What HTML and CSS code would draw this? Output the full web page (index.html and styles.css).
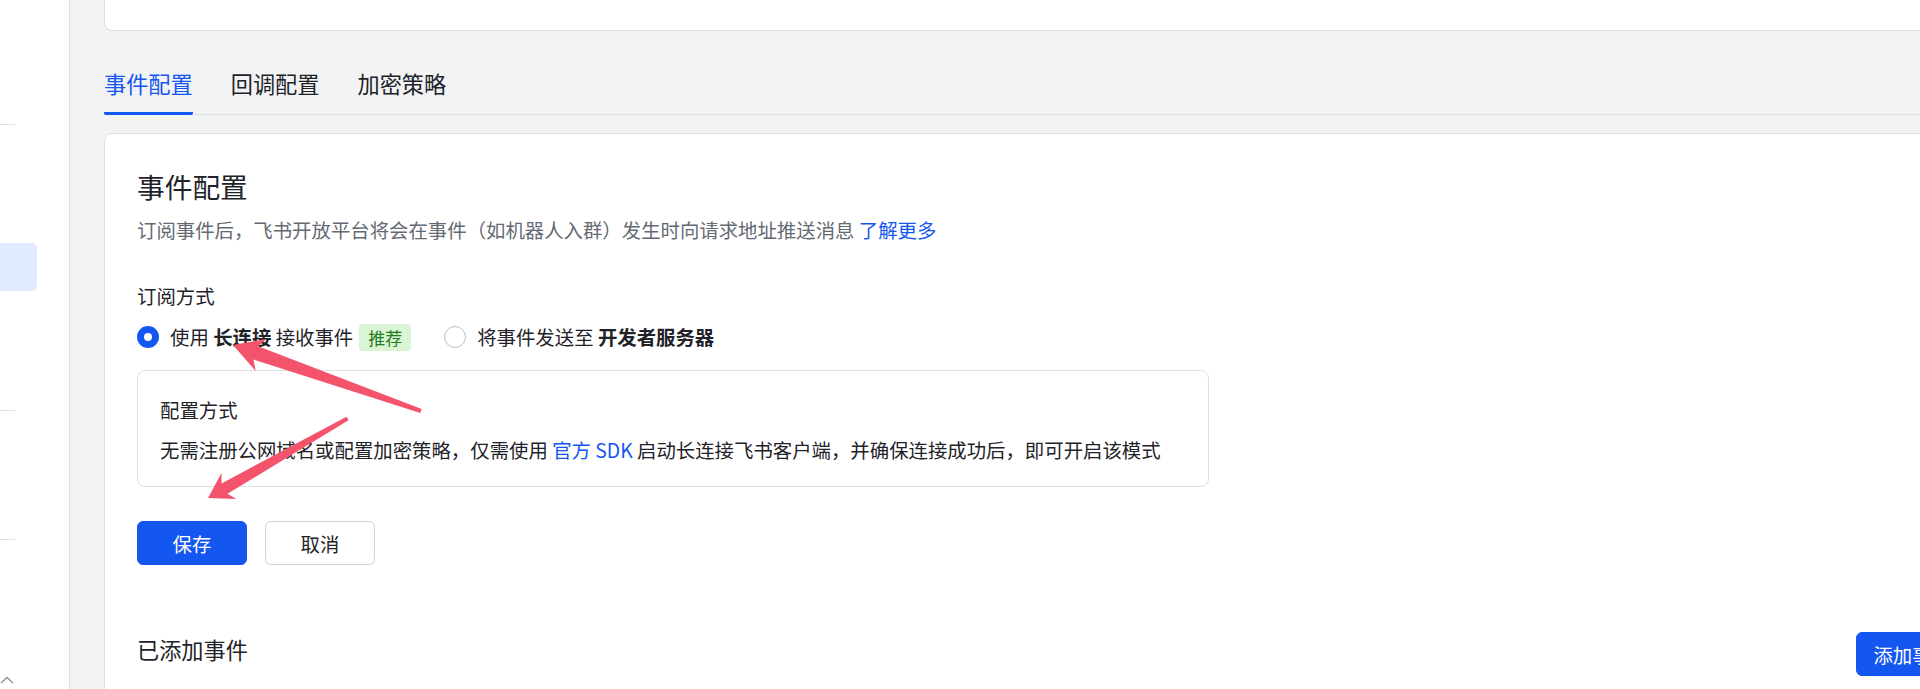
FILE: index.html
```html
<!DOCTYPE html>
<html lang="zh-CN">
<head>
    <meta charset="UTF-8">
    <meta name="viewport" content="width=device-width, initial-scale=1.0">
    <title>事件与回调</title>
    <link rel="stylesheet" href="styles.css">
</head>
<body>
    <div class="layout">
        <aside class="sidebar">
            <div class="side-divider first"></div>
            <div class="side-item active"></div>
            <div class="side-divider second"></div>
            <div class="side-divider third"></div>
            <svg class="side-chevron" width="14" height="8" viewBox="0 0 14 8">
                <polyline points="1,7 7,1.5 13,7" fill="none" stroke="#8f959e" stroke-width="1.4"/>
            </svg>
        </aside>

        <main class="main">
            <div class="page">
                <div class="info-card"></div>

                <nav class="tabs">
                    <div class="tab active">事件配置</div>
                    <div class="tab">回调配置</div>
                    <div class="tab">加密策略</div>
                </nav>

                <section class="panel">
                    <h2 class="panel-title">事件配置</h2>
                    <p class="panel-desc">订阅事件后，飞书开放平台将会在事件（如机器人入群）发生时向请求地址推送消息 <a class="link">了解更多</a></p>

                    <div class="field-label">订阅方式</div>
                    <div class="radio-group">
                        <label class="radio checked">
                            <span class="radio-dot"></span>
                            <span>使用 <b>长连接</b> 接收事件</span>
                            <span class="tag">推荐</span>
                        </label>
                        <label class="radio">
                            <span class="radio-dot"></span>
                            <span>将事件发送至 <b>开发者服务器</b></span>
                        </label>
                    </div>

                    <div class="mode-box">
                        <div class="mode-title">配置方式</div>
                        <div class="mode-text">无需注册公网域名或配置加密策略，仅需使用 <a class="link">官方 SDK</a> 启动长连接飞书客户端，并确保连接成功后，即可开启该模式</div>
                    </div>

                    <div class="actions">
                        <button class="btn btn-primary">保存</button>
                        <button class="btn btn-default">取消</button>
                    </div>

                    <div class="added-header">
                        <h3>已添加事件</h3>
                        <button class="btn btn-primary btn-add">添加事件</button>
                    </div>
                </section>
            </div>
        </main>
    </div>

    <!-- red arrows drawn over the screenshot -->
    <svg class="annotations" width="1920" height="689" viewBox="0 0 1920 689">
        <polygon fill="#f4546b" points="233,345 255.7,370.9 253.4,359.5 420.3,412.9 421.7,409.1 258,346.3 266.9,338.8"/>
        <polygon fill="#f4546b" points="208,498 236.3,499.1 227.5,493.8 348.5,420.2 346.5,416.8 221.5,483.4 221.5,473.1"/>
    </svg>
</body>
</html>
```

FILE: styles.css
```css
:root {
    --primary: #1456f0;
    --text: #1f2329;
    --text-sub: #646a73;
    --border: #dee0e3;
    --bg: #f2f3f5;
}

* {
    margin: 0;
    padding: 0;
    box-sizing: border-box;
    font-family: "Noto Sans CJK SC", "Noto Sans", sans-serif;
}

body {
    background: #fff;
    color: var(--text);
    height: 100vh;
    overflow: hidden;
}

.layout {
    display: flex;
    height: 100vh;
}

/* sidebar (cut off on the left) */
.sidebar {
    width: 70px;
    flex-shrink: 0;
    background: #fff;
    border-right: 1px solid var(--border);
    display: flex;
    flex-direction: column;
}

.side-divider {
    width: 15px;
    height: 1px;
    background: var(--border);
}

.side-divider.first { margin-top: 124px; }
.side-divider.second { margin-top: 119px; }
.side-divider.third { margin-top: 128px; }

.side-item.active {
    margin-top: 118px;
    width: 37px;
    height: 48px;
    background: #e1eaff;
    border-radius: 0 5px 5px 0;
}

.side-chevron {
    margin-top: 136px;
}

/* main area */
.main {
    flex: 1;
    background: var(--bg);
    padding-left: 34px;
    overflow: hidden;
}

.page {
    width: 1897px;
}

.info-card {
    height: 31px;
    background: #fff;
    border: 1px solid var(--border);
    border-top: none;
    border-radius: 0 0 0 8px;
}

.tabs {
    margin-top: 37px;
    display: flex;
    gap: 38px;
    border-bottom: 1px solid var(--border);
}

.tab {
    font-size: 22.2px;
    line-height: 30px;
    padding-bottom: 14px;
    border-bottom: 3px solid transparent;
    margin-bottom: -1px;
    color: var(--text);
}

.tab.active {
    color: var(--primary);
    border-bottom-color: var(--primary);
    border-radius: 2px;
}

.panel {
    margin-top: 18px;
    background: #fff;
    border: 1px solid var(--border);
    border-radius: 8px;
    padding: 33px 32px;
    height: 600px;
}

.panel-title {
    font-size: 27.7px;
    font-weight: 400;
    line-height: 38px;
}

.panel-desc {
    margin-top: 10px;
    font-size: 19.4px;
    line-height: 30px;
    color: var(--text-sub);
}

.link {
    color: var(--primary);
    text-decoration: none;
}

.field-label {
    margin-top: 36px;
    font-size: 19.4px;
    line-height: 30px;
}

.radio-group {
    margin-top: 11px;
    display: flex;
    align-items: center;
    gap: 33px;
}

.radio {
    display: flex;
    align-items: center;
    font-size: 19.4px;
    line-height: 30px;
}

.radio b {
    font-weight: 700;
}

.radio-dot {
    width: 22px;
    height: 22px;
    border-radius: 50%;
    border: 1.5px solid #bbbfc4;
    background: #fff;
    margin-right: 11px;
}

.radio.checked .radio-dot {
    border: 7px solid var(--primary);
}

.tag {
    margin-left: 6px;
    padding: 0 9px;
    height: 27px;
    line-height: 27px;
    font-size: 17px;
    background: #d9f5d6;
    color: #237b19;
    border-radius: 4px;
}

.mode-box {
    margin-top: 18px;
    width: 1072px;
    border: 1px solid var(--border);
    border-radius: 8px;
    padding: 24px 22px 21px;
    font-size: 19.4px;
    line-height: 30px;
}

.mode-text {
    margin-top: 10px;
}

.actions {
    margin-top: 34px;
    display: flex;
    gap: 18px;
}

.btn {
    height: 44px;
    min-width: 110px;
    padding: 0 16px;
    font-size: 19.4px;
    border-radius: 6px;
    cursor: pointer;
}

.btn-primary {
    background: var(--primary);
    border: 1px solid var(--primary);
    color: #fff;
}

.btn-default {
    background: #fff;
    border: 1px solid #d0d3d6;
    color: var(--text);
}

.added-header {
    margin-top: 67px;
    display: flex;
    justify-content: space-between;
    align-items: flex-start;
}

.added-header h3 {
    margin-top: 2px;
    font-size: 22.2px;
    font-weight: 400;
    line-height: 30px;
}

.btn-add {
    min-width: 0;
}

.annotations {
    position: absolute;
    top: 0;
    left: 0;
    pointer-events: none;
}
```
